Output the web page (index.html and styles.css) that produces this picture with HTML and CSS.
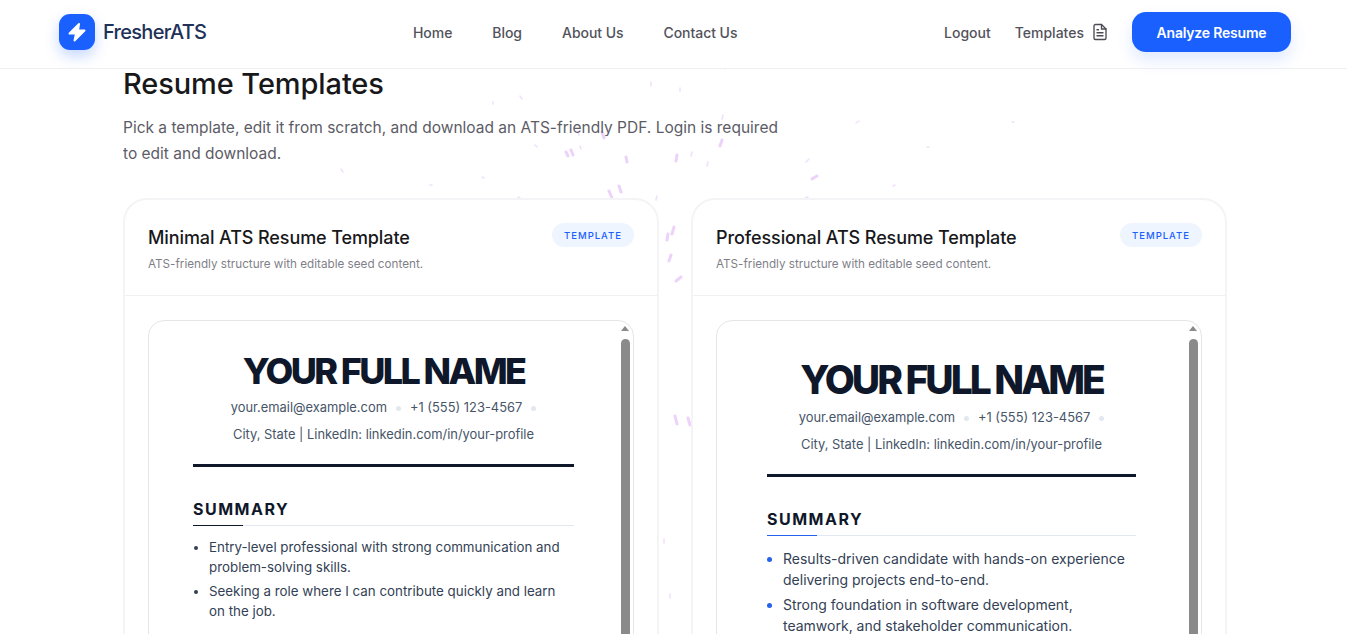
FILE: index.html
```html
<!DOCTYPE html>
<html>
	<head>
		<meta charset="UTF-8">
		<title>Resume Templates</title>
		<link rel="stylesheet" href="styles.css">
	</head>
	<body>
		<header class="nav">
			<a class="brand">
				<span class="brand-mark">
					<svg width="24" height="24" viewBox="0 0 24 24" fill="#fff" stroke="#fff" stroke-width="2" stroke-linejoin="round"><path d="M14 4 4.500 13.500H11L9.500 20.500 19.500 10.500H13z"/></svg>
				</span>
				<span class="brand-name">FresherATS</span>
			</a>
			<nav class="nav-links">
				<a>Home</a>
				<a>Blog</a>
				<a>About Us</a>
				<a>Contact Us</a>
			</nav>
			<div class="nav-right">
				<a>Logout</a>
				<a class="nav-templates">Templates
					<svg width="18" height="18" viewBox="0 0 24 24" fill="none" stroke="#4b4b55" stroke-width="1.8" stroke-linejoin="round" stroke-linecap="round"><path d="M14 2H6a2 2 0 0 0-2 2v16a2 2 0 0 0 2 2h12a2 2 0 0 0 2-2V8z"/><path d="M14 2v6h6"/><path d="M8 13h8M8 17h8M8 9h2"/></svg>
				</a>
				<a class="btn-analyze">Analyze Resume</a>
			</div>
		</header>

		<svg class="confetti" width="1347" height="634" stroke="#ecd3fa" stroke-linecap="round">
			<g stroke-width="1.5" opacity="0.7">
				<path d="M725 69l1-2M651 82l0 4M680 88l0 3M520 96l2 3M493 102l0 2M723 115l-1 4M856 123l3-2M578 131l1 4M535 145l2 2M580 146l1 3M692 152l-1 4M708 162l-1 4M806 162l3-3M482 177l2 1M518 197l2 1M805 198l3-1M657 196l-1 4M430 185l2 0M341 169l2 3M893 186l2-1M927 147l2 0M1012 122l2 0M664 539l0 4M670 594l0 4"/>
			</g>
			<g stroke-width="3">
				<path d="M602 132l2 6M720 146l2-6M571 150l2 5M566 152l2 4M626 157l1 5M677 155l-1 6M812 179l5-3M609 191l3 7M619 186l2 6M674 227l-2 7M668 234l-1 6M671 255l-2 6M676 281l5-4M675 416l2 8M688 418l2 7"/>
			</g>
		</svg>

		<main class="page">
			<h1>Resume Templates</h1>
			<p class="intro">Pick a template, edit it from scratch, and download an ATS-friendly PDF. Login is required to edit and download.</p>
			<div class="cards">
				<section class="card">
					<div class="card-head">
						<div>
							<h2>Minimal ATS Resume Template</h2>
							<p>ATS-friendly structure with editable seed content.</p>
						</div>
						<span class="tag">TEMPLATE</span>
					</div>
					<div class="card-body">
						<div class="preview">
							<div class="bar"><i class="arrow"></i><i class="thumb"></i></div>
							<div class="sheet">
								<div class="name">YOUR FULL NAME</div>
								<div class="contact"><span>your.email@example.com</span><i></i><span>+1 (555) 123-4567</span><i></i></div>
								<div class="contact">City, State | LinkedIn: linkedin.com/in/your-profile</div>
								<div class="rule"></div>
								<h3>SUMMARY</h3>
								<ul>
									<li>Entry-level professional with strong communication and problem-solving skills.</li>
									<li>Seeking a role where I can contribute quickly and learn on the job.</li>
								</ul>
							</div>
						</div>
					</div>
				</section>
				<section class="card pro">
					<div class="card-head">
						<div>
							<h2>Professional ATS Resume Template</h2>
							<p>ATS-friendly structure with editable seed content.</p>
						</div>
						<span class="tag">TEMPLATE</span>
					</div>
					<div class="card-body">
						<div class="preview">
							<div class="bar"><i class="arrow"></i><i class="thumb"></i></div>
							<div class="sheet">
								<div class="name">YOUR FULL NAME</div>
								<div class="contact"><span>your.email@example.com</span><i></i><span>+1 (555) 123-4567</span><i></i></div>
								<div class="contact">City, State | LinkedIn: linkedin.com/in/your-profile</div>
								<div class="rule"></div>
								<h3>SUMMARY</h3>
								<ul>
									<li>Results-driven candidate with hands-on experience delivering projects end-to-end.</li>
									<li>Strong foundation in software development, teamwork, and stakeholder communication.</li>
								</ul>
							</div>
						</div>
					</div>
				</section>
			</div>
		</main>
	</body>
</html>
```

FILE: styles.css
```css
*{
	box-sizing: border-box;
}
html,body{
	height: 100%;
	overflow: hidden;
}
body{
	margin: 0;
	background: #fff;
	color: #18181b;
	font-family: "Inter", "Liberation Sans", sans-serif;
}
a{
	cursor: pointer;
}
.nav{
	position: relative;
	z-index: 5;
	height: 69px;
	display: flex;
	align-items: center;
	padding: 0 56px 4px 59px;
	background: #fff;
	border-bottom: 1px solid #f0f0f2;
}
.brand{
	display: flex;
	align-items: center;
	gap: 8px;
	width: 354px;
}
.brand-mark{
	width: 36px;
	height: 36px;
	border-radius: 11px;
	background: #1a60ff;
	box-shadow: 0 6px 14px rgba(26,96,255,.25);
	display: flex;
	align-items: center;
	justify-content: center;
}
.brand-name{
	font-size: 20px;
	font-weight: 500;
	letter-spacing: -0.7px;
	color: #1e3158;
}
.nav-links{
	display: flex;
	gap: 40px;
	font-size: 14px;
	font-weight: 500;
	letter-spacing: -0.05px;
	color: #52525b;
}
.nav-right{
	margin-left: auto;
	display: flex;
	align-items: center;
	gap: 24px;
	font-size: 14px;
	font-weight: 500;
	color: #52525b;
}
.nav-templates{
	display: flex;
	align-items: center;
	gap: 7px;
}
.btn-analyze{
	width: 159px;
	height: 40px;
	margin-left: -1px;
	display: flex;
	align-items: center;
	justify-content: center;
	border-radius: 14px;
	background: #1a60ff;
	color: #fff;
	font-weight: 600;
	letter-spacing: -0.2px;
	box-shadow: 0 8px 16px rgba(26,96,255,.14);
}
.confetti{
	position: absolute;
	left: 0;
	top: 0;
	z-index: 0;
}
/* slides 9px under the header so the h1 box is not clipped */
.page{
	position: relative;
	z-index: 1;
	width: 1104px;
	height: calc(100vh - 60px);
	margin: -9px 0 0 123px;
	padding-top: 9px;
	overflow: hidden;
}
h1{
	margin: 0;
	font-size: 29px;
	line-height: 30px;
	font-weight: 500;
	letter-spacing: -0.1px;
	color: #18181b;
}
.intro{
	width: 670px;
	margin: 16px 0 0;
	font-size: 15.5px;
	line-height: 26px;
	color: #5c5c66;
}
.cards{
	display: grid;
	grid-template-columns: 536px 536px;
	gap: 32px;
	margin-top: 31px;
}
.card{
	height: 600px;
	background: #fff;
	border: 2px solid #f4f4f6;
	border-radius: 24px;
}
.card-head{
	height: 96px;
	display: flex;
	justify-content: space-between;
	padding: 23px 23px 0;
	border-bottom: 1px solid #f0f0f2;
}
.card-head h2{
	margin: 3px 0 0;
	font-size: 18px;
	line-height: 24px;
	font-weight: 500;
	letter-spacing: -0.1px;
}
.card-head p{
	margin: 6px 0 0;
	font-size: 11.7px;
	line-height: 16px;
	color: #7f7f89;
}
.tag{
	width: 82px;
	height: 24px;
	display: flex;
	align-items: center;
	justify-content: center;
	border-radius: 12px;
	background: #eff5ff;
	color: #1a60ff;
	font-size: 9.5px;
	font-weight: 500;
	letter-spacing: 1px;
}
.card-body{
	padding: 24px 23px;
}
.preview{
	position: relative;
	height: 500px;
	border: 1px solid #e6e6e9;
	border-radius: 16px;
	overflow: hidden;
}
.bar{
	position: absolute;
	top: 0;
	right: 0;
	bottom: 0;
	width: 16px;
}
.arrow{
	position: absolute;
	top: 5px;
	left: 4px;
	border-left: 4.5px solid transparent;
	border-right: 4.5px solid transparent;
	border-bottom: 5px solid #8a8a8a;
}
.thumb{
	position: absolute;
	top: 18px;
	left: 4px;
	width: 9px;
	height: 480px;
	border-radius: 5px 5px 0 0;
	background: #8a8a8a;
}
.sheet{
	padding: 31px 59px 0 44px;
	text-align: center;
}
.name{
	font-size: 36px;
	line-height: 39px;
	font-weight: 800;
	letter-spacing: -2.6px;
	color: #0f172a;
}
.contact{
	display: flex;
	justify-content: center;
	align-items: center;
	gap: 9px;
	margin-top: 7px;
	font-size: 12.9px;
	line-height: 20px;
	color: #475569;
}
.contact i{
	width: 5px;
	height: 5px;
	border-radius: 50%;
	background: #e2e8f0;
}
.rule{
	height: 3px;
	margin-top: 19px;
	background: #0f172a;
}
h3{
	position: relative;
	margin: 31px 0 0;
	padding-bottom: 5px;
	text-align: left;
	font-size: 16px;
	line-height: 22px;
	font-weight: 700;
	letter-spacing: 1.5px;
	color: #0f172a;
	border-bottom: 1px solid #e2e8f0;
}
h3:after{
	content: "";
	position: absolute;
	left: 0;
	bottom: -1px;
	width: 50px;
	height: 1px;
	background: #0f172a;
}
ul{
	margin: 11px 0 0;
	padding-left: 16px;
	text-align: left;
	font-size: 13.35px;
	line-height: 20px;
	color: #334155;
}
li{
	margin-bottom: 4px;
}
.pro .sheet{
	padding: 38px 65px 0 50px;
}
.pro .name{
	font-size: 39px;
	line-height: 42px;
	letter-spacing: -3px;
}
.pro h3:after{
	background: #2563eb;
}
.pro ul{
	margin-top: 12px;
	font-size: 14px;
	line-height: 21.3px;
}
.pro li{
	margin-bottom: 3px;
}
.pro li::marker{
	color: #2563eb;
}
```
